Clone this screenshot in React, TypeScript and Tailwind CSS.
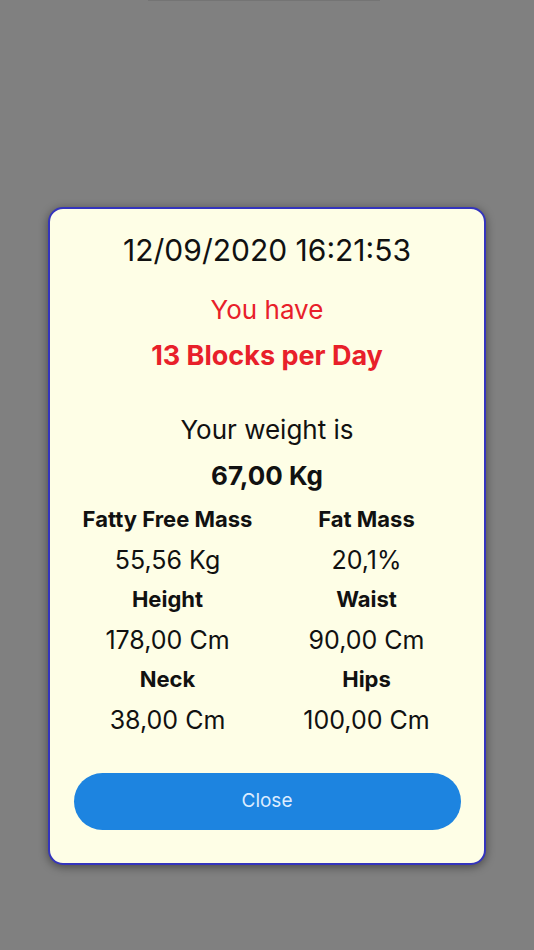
export default function App() {
  const stats = [
    { label: 'Fatty Free Mass', value: '55,56 Kg' },
    { label: 'Fat Mass', value: '20,1%' },
    { label: 'Height', value: '178,00 Cm' },
    { label: 'Waist', value: '90,00 Cm' },
    { label: 'Neck', value: '38,00 Cm' },
    { label: 'Hips', value: '100,00 Cm' }
  ];

  return (
    <div
      className="relative h-[950px] w-full bg-[#808080] flex items-start justify-center pt-[207px]"
      style={{ fontFamily: 'Inter, "Noto Sans", sans-serif' }}
    >
      <div className="absolute top-0 left-[148px] w-[232px] h-[1px] bg-[#747474]" />
      <div className="w-[438px] h-[658px] bg-[#fefee6] border-2 border-[#3434bd] rounded-[15px] shadow-[0_2px_10px_rgba(0,0,0,0.45)] flex flex-col items-center">
        <div className="mt-[21px] text-[30px] leading-[40px] text-[#111]">12/09/2020 16:21:53</div>
        <div className="mt-[23px] text-[26px] leading-[34px] text-[#e8202a]">You have</div>
        <div className="mt-[12px] text-[27px] leading-[34px] font-bold text-[#e8202a]">13 Blocks per Day</div>
        <div className="mt-[40px] text-[26px] leading-[34px] text-[#111]">Your weight is</div>
        <div className="mt-[12px] text-[26px] leading-[34px] font-bold text-[#111]">67,00 Kg</div>
        <div className="mt-[12px] w-full px-[18px] grid grid-cols-2 gap-y-[10px]">
          {stats.map((s, i) => (
            <div key={i} className="flex flex-col items-center">
              <div className="text-[22px] leading-[28px] font-bold text-[#111]">{s.label}</div>
              <div className="mt-[12px] text-[25px] leading-[30px] text-[#111]">{s.value}</div>
            </div>
          ))}
        </div>
        <button className="mt-[38px] w-[387px] h-[57px] rounded-full bg-[#1d84e0] text-[19px] text-[#dcecff]">
          Close
        </button>
      </div>
    </div>
  );
}
